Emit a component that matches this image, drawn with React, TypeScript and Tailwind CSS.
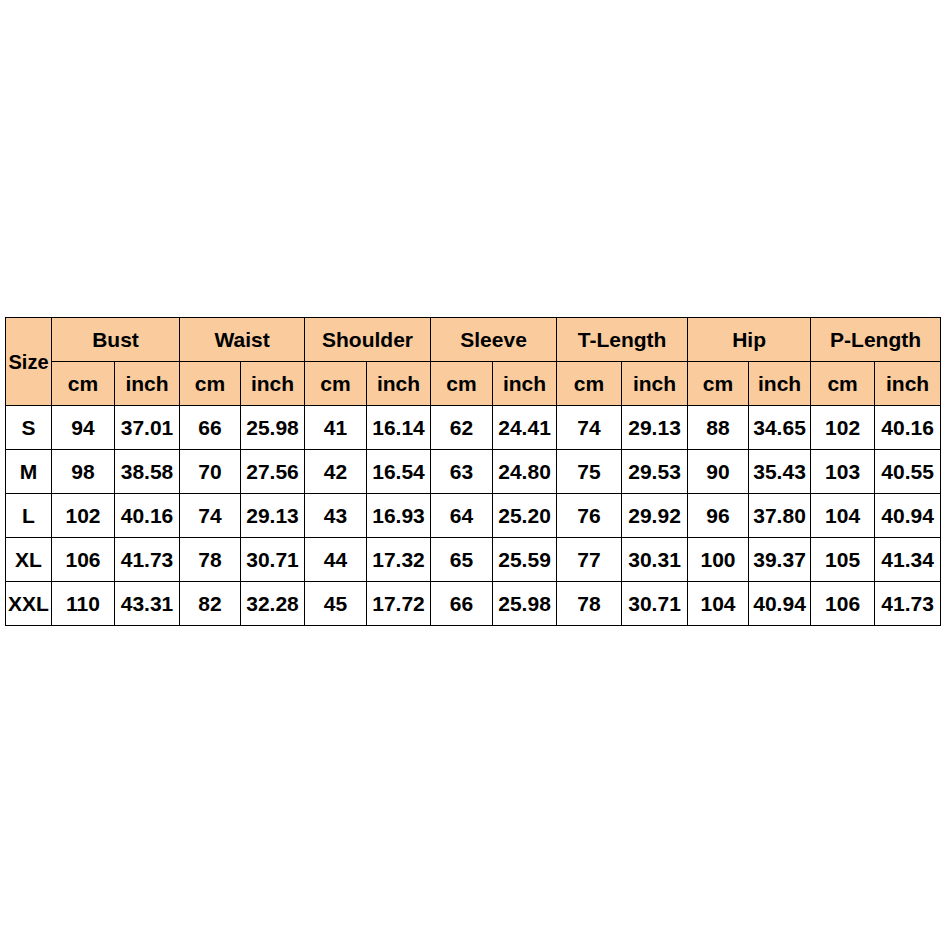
import { Fragment } from "react";

const groups = ["Bust", "Waist", "Shoulder", "Sleeve", "T-Length", "Hip", "P-Length"];

const rows: [string, ...string[]][] = [
  ["S", "94", "37.01", "66", "25.98", "41", "16.14", "62", "24.41", "74", "29.13", "88", "34.65", "102", "40.16"],
  ["M", "98", "38.58", "70", "27.56", "42", "16.54", "63", "24.80", "75", "29.53", "90", "35.43", "103", "40.55"],
  ["L", "102", "40.16", "74", "29.13", "43", "16.93", "64", "25.20", "76", "29.92", "96", "37.80", "104", "40.94"],
  ["XL", "106", "41.73", "78", "30.71", "44", "17.32", "65", "25.59", "77", "30.31", "100", "39.37", "105", "41.34"],
  ["XXL", "110", "43.31", "82", "32.28", "45", "17.72", "66", "25.98", "78", "30.71", "104", "40.94", "106", "41.73"],
];

// border-to-border widths read off the picture
const widths = [46, 63, 65, 61, 64, 62, 64, 62, 64, 65, 66, 61, 62, 64, 66];

const cell = "border border-black text-center align-middle p-0 h-[44px] whitespace-nowrap";

export default function App() {
  return (
    <div className="w-[948px] h-[948px] bg-white pt-[317px] pl-[5px]">
      <table
        className="border-collapse table-fixed w-[936px] text-[21px] font-bold text-black leading-none"
        style={{ fontFamily: '"Liberation Sans", Arial, sans-serif' }}
      >
        <colgroup>
          {widths.map((w, i) => (
            <col key={i} style={{ width: w }} />
          ))}
        </colgroup>
        <thead>
          <tr className="bg-[#facb9c]">
            <th rowSpan={2} className={cell + " text-[20px]"}>
              Size
            </th>
            {groups.map((g) => (
              <th key={g} colSpan={2} className={cell}>
                {g}
              </th>
            ))}
          </tr>
          <tr className="bg-[#facb9c]">
            {groups.map((g) => (
              <Fragment key={g}>
                <th className={cell}>cm</th>
                <th className={cell}>inch</th>
              </Fragment>
            ))}
          </tr>
        </thead>
        <tbody>
          {rows.map((r) => (
            <tr key={r[0]}>
              {r.map((v, i) => (
                <td key={i} className={cell}>
                  {v}
                </td>
              ))}
            </tr>
          ))}
        </tbody>
      </table>
    </div>
  );
}
